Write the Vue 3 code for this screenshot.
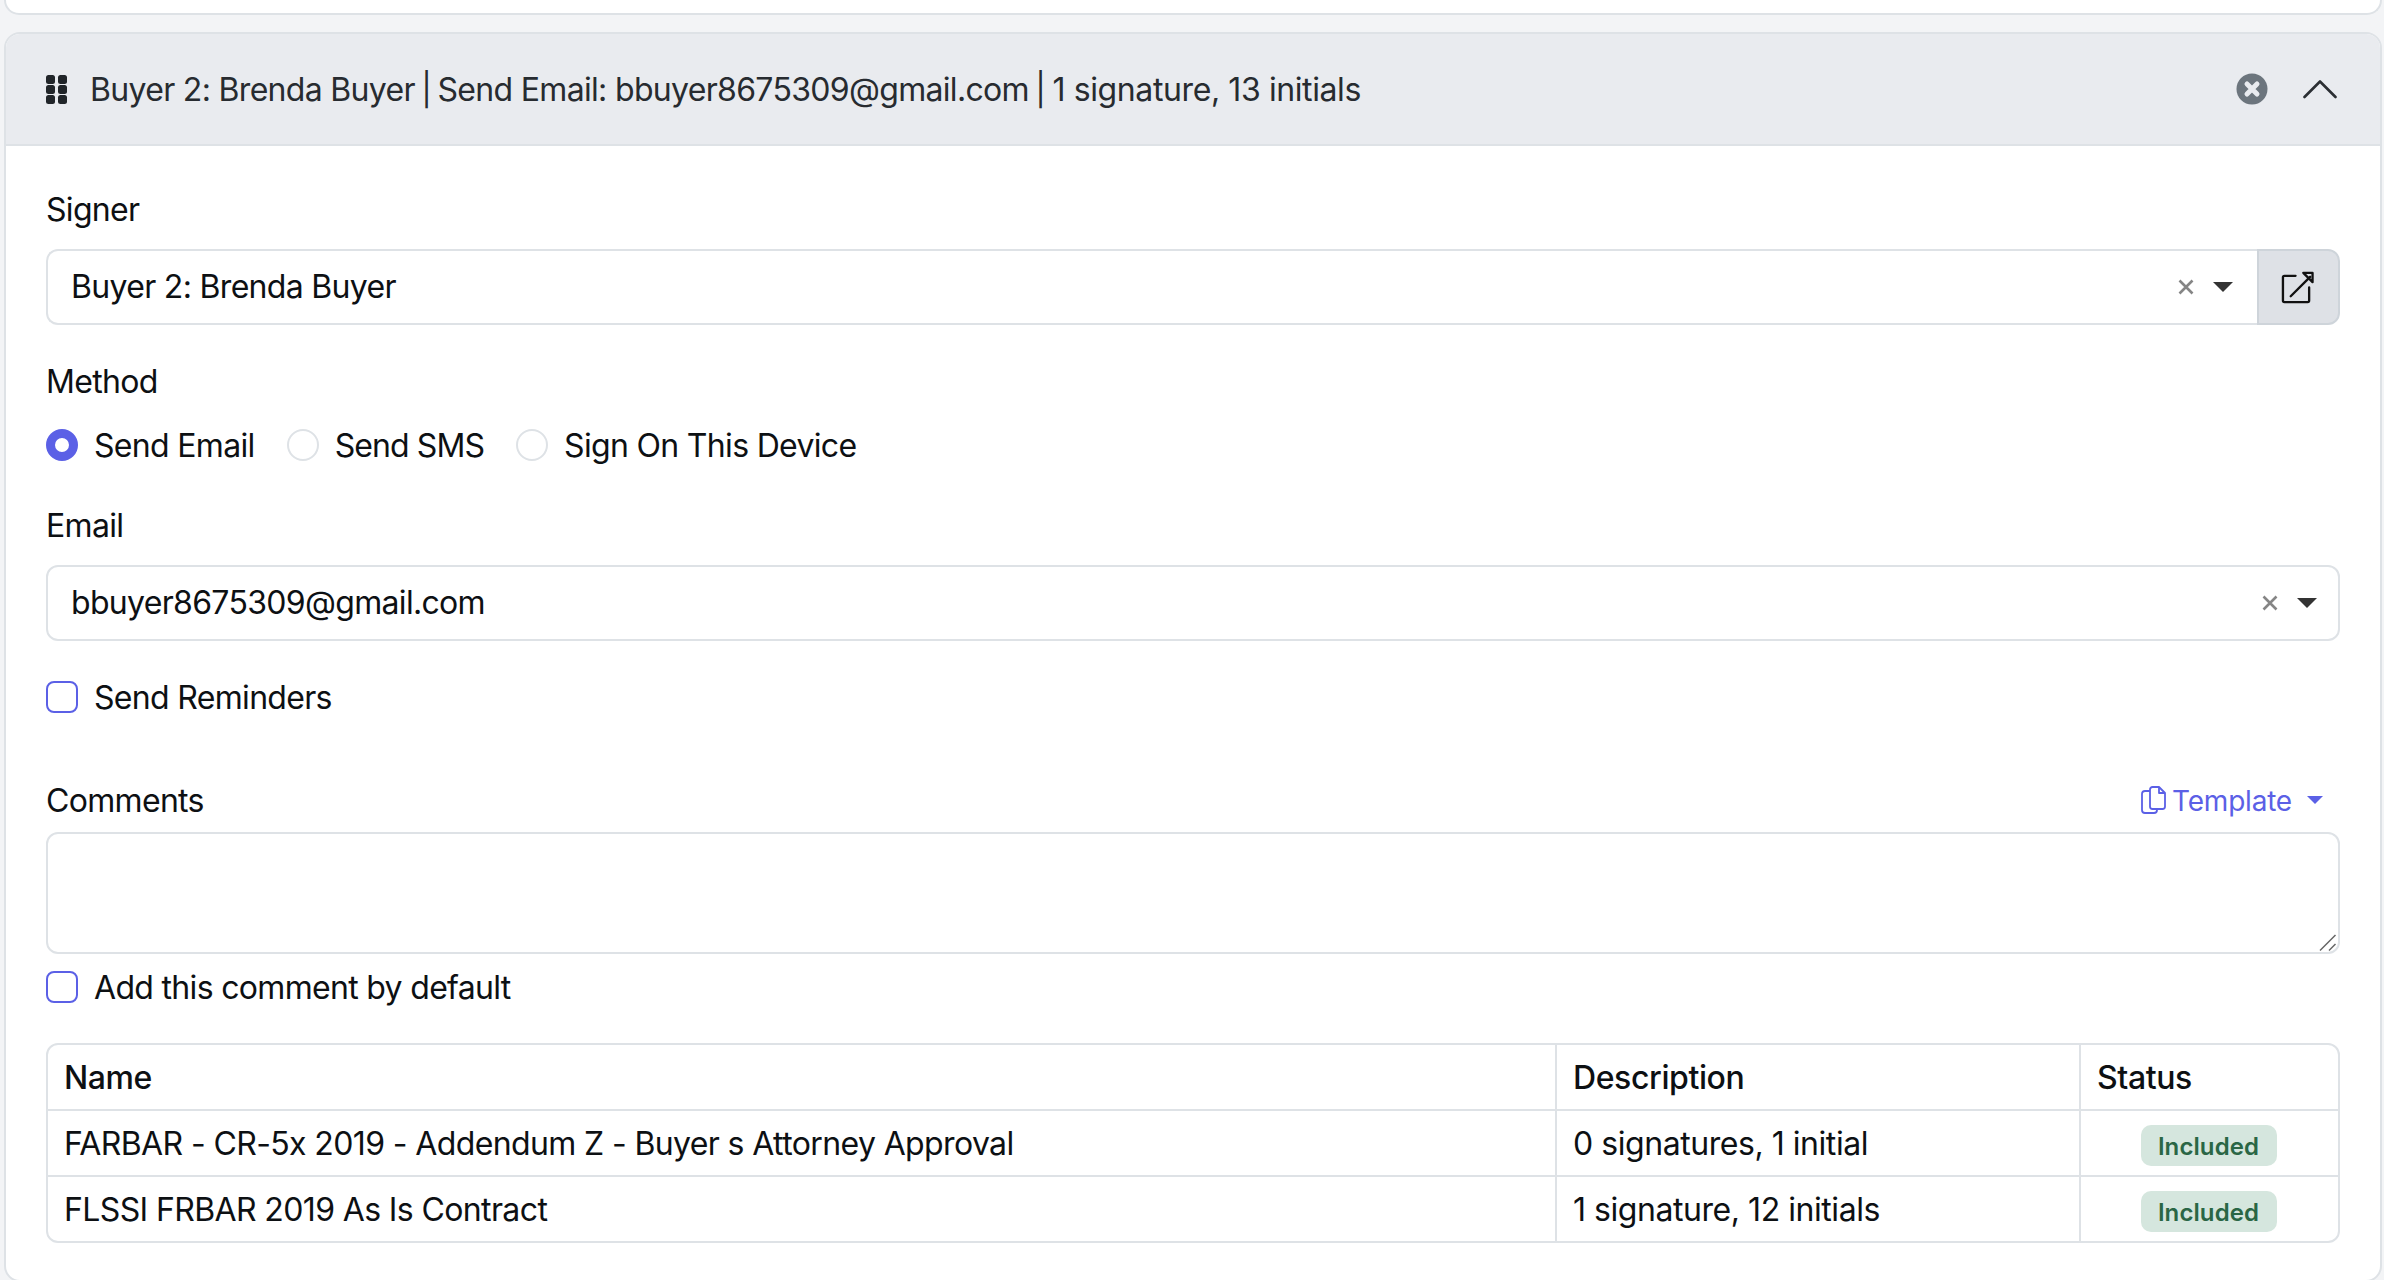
<script setup>
const rows = [
  { pre: 'FARBAR - CR-5', x: 'x', name: ' 2019 - Addendum Z - Buyer s Attorney Approval', desc: '0 signatures, 1 initial' },
  { pre: '', x: '', name: 'FLSSI FRBAR 2019 As Is Contract', desc: '1 signature, 12 initials' },
]
</script>

<template>
  <div class="page">
    <div class="prev-card"></div>
    <section class="card">
      <header class="card-head">
        <svg class="grip" width="22" height="29" viewBox="0 0 22 29" fill="currentColor">
          <rect x="0" y="0" width="9" height="9" rx="2.5" />
          <rect x="12" y="0" width="9" height="9" rx="2.5" />
          <rect x="0" y="10" width="9" height="9" rx="2.5" />
          <rect x="12" y="10" width="9" height="9" rx="2.5" />
          <rect x="0" y="20" width="9" height="9" rx="2.5" />
          <rect x="12" y="20" width="9" height="9" rx="2.5" />
        </svg>
        <span class="head-title">Buyer 2: Brenda Buyer <span class="pipe">|</span> Send Email: bbuyer8675309@gmail.com <span class="pipe pipe-2">|</span> <span class="head-tail">1 signature, 13 initials</span></span>
        <svg class="head-close" width="32" height="32" viewBox="0 0 32 32">
          <circle cx="16" cy="16" r="15.5" fill="#6c757d" />
          <path d="M11 11l10 10M21 11L11 21" stroke="#e9ebef" stroke-width="5" stroke-linecap="round" />
        </svg>
        <svg class="head-chevron" width="34" height="20" viewBox="0 0 34 20" fill="none">
          <path d="M1.5 18L17 2.5 32.5 18" stroke="#2b2f33" stroke-width="2.6" stroke-linecap="round" stroke-linejoin="round" />
        </svg>
      </header>

      <div class="card-body">
        <div class="label">Signer</div>
        <div class="group">
          <div class="select select-joined">
            <span class="select-value">Buyer 2: Brenda Buyer</span>
            <svg class="sel-x" width="16" height="16" viewBox="0 0 16 16"><path d="M1.5 1.5l13 13M14.5 1.5l-13 13" stroke="#858585" stroke-width="2.6" /></svg>
            <span class="sel-arrow"></span>
          </div>
          <button class="ext-btn" type="button">
            <svg width="33" height="33" viewBox="0 0 34 34" fill="none" stroke="#111" stroke-width="2.4" stroke-linejoin="round" stroke-linecap="round">
              <path d="M15 5H3.5A1.5 1.5 0 0 0 2 6.5v24A1.5 1.5 0 0 0 3.500 32h24a1.500 1.500 0 0 0 1.500-1.500V17" />
              <path d="M10 26L30 6" />
              <path d="M23 2h9.500v9.500z" />
            </svg>
          </button>
        </div>

        <div class="label label-method">Method</div>
        <div class="radios">
          <label class="opt"><span class="radio radio-on"></span><span class="opt-text">Send Email</span></label>
          <label class="opt"><span class="radio"></span><span class="opt-text opt-sms">Send SMS</span></label>
          <label class="opt"><span class="radio"></span><span class="opt-text">Sign On This Device</span></label>
        </div>

        <div class="label label-email">Email</div>
        <div class="select">
          <span class="select-value">bbuyer8675309@gmail.com</span>
          <svg class="sel-x" width="16" height="16" viewBox="0 0 16 16"><path d="M1.500 1.500l13 13M14.500 1.500l-13 13" stroke="#858585" stroke-width="2.600" /></svg>
          <span class="sel-arrow"></span>
        </div>

        <label class="opt check-row"><span class="check"></span><span class="opt-text">Send Reminders</span></label>

        <div class="comments-head">
          <span class="comments-label">Comments</span>
          <a class="template">
            <svg width="25" height="28" viewBox="0 0 25 28" fill="none" stroke="currentColor" stroke-width="1.800" stroke-linejoin="round">
              <path d="M9 3.500A2.500 2.500 0 0 1 11.500 1H18l6 6v13.500a2.500 2.500 0 0 1-2.500 2.500h-10A2.500 2.500 0 0 1 9 20.500z" />
              <path d="M18 1v6h6" />
              <path d="M9 5H4A3 3 0 0 0 1 8v16a3 3 0 0 0 3 3h9a3 3 0 0 0 3-3v-1" />
            </svg>
            <span>Template</span>
            <span class="tpl-caret"></span>
          </a>
        </div>
        <div class="area-wrap">
          <textarea class="area"></textarea>
          <svg class="area-grip" width="18" height="18" viewBox="0 0 18 18" fill="none" stroke="#666" stroke-width="1.500">
            <path d="M1 16.500L16.500 1M10 16.500l6.500-6.500" />
          </svg>
        </div>
        <label class="opt check-row2"><span class="check"></span><span class="opt-text">Add this comment by default</span></label>

        <div class="table-wrap">
          <table class="docs">
            <colgroup>
              <col class="c1" />
              <col class="c2" />
              <col />
            </colgroup>
            <thead>
              <tr><th>Name</th><th>Description</th><th>Status</th></tr>
            </thead>
            <tbody>
              <tr v-for="r in rows" :key="r.name">
                <td class="name-cell">{{ r.pre }}<span class="plain-x">{{ r.x }}</span>{{ r.name }}</td>
                <td class="desc-cell">{{ r.desc }}</td>
                <td class="status"><span class="badge">Included</span></td>
              </tr>
            </tbody>
          </table>
        </div>
      </div>
    </section>
  </div>
</template>

<style scoped>
.page {
  width: 2384px;
  height: 1280px;
  overflow: hidden;
  background: #f3f4f6;
  box-sizing: border-box;
  padding-left: 4px;
  font-family: Inter, "Liberation Sans", sans-serif;
  font-size: 32px;
  line-height: 48px;
  letter-spacing: -0.68px;
  color: #0d1013;
}
.prev-card {
  width: 2378px;
  height: 15px;
  box-sizing: border-box;
  background: #fff;
  border: 2px solid #dee2e6;
  border-top: 0;
  border-radius: 0 0 16px 16px;
  margin-bottom: 17px;
}
.card {
  width: 2378px;
  height: 1250px;
  box-sizing: border-box;
  background: #fff;
  border: 2px solid #dee2e6;
  border-radius: 16px;
  overflow: hidden;
}
.card-head {
  height: 112px;
  box-sizing: border-box;
  display: flex;
  align-items: center;
  background: #e9ebef;
  border-bottom: 2px solid #dee2e6;
  padding: 0 43px 0 40px;
  color: #272b30;
}
.grip {
  flex: none;
  margin-right: 22px;
  color: #212529;
}
.head-title { flex: 1; position: relative; top: 1px; }
.pipe { margin: 0 -2px; }
.pipe-2 { margin: 0 -1px 0 -2px; }
.head-tail { letter-spacing: -0.4px; }
.head-close { flex: none; margin-right: 35px; }
.head-chevron { flex: none; margin-bottom: 1px; }
.card-body { padding: 39px 40px 0; }
.label { margin-bottom: 16px; position: relative; top: 1px; }
.label-method { margin-top: 32px; }
.label-email { margin-top: 32px; }
.group { display: flex; }
.select {
  height: 76px;
  box-sizing: border-box;
  display: flex;
  align-items: center;
  border: 2px solid #dee2e6;
  border-radius: 12px;
  padding: 0 22px 0 23px;
  background: #fff;
}
.select-joined {
  flex: 1;
  border-radius: 12px 0 0 12px;
  border-right: 0;
  padding-right: 24px;
}
.select-value { flex: 1; }
.sel-x { flex: none; margin-right: 20px; position: relative; left: 1px; }
.sel-arrow {
  flex: none;
  width: 0;
  height: 0;
  border-left: 10px solid transparent;
  border-right: 10px solid transparent;
  border-top: 10px solid #333;
}
.select:not(.select-joined) .sel-x { left: 2px; }
.select:not(.select-joined) .sel-arrow { position: relative; left: 1px; }
.ext-btn {
  flex: none;
  width: 83px;
  height: 76px;
  padding: 0 3px 0 0;
  display: flex;
  align-items: center;
  justify-content: center;
  background: #dee1e6;
  border: 2px solid #ced4da;
  border-radius: 0 12px 12px 0;
}
.radios { display: flex; gap: 32px; height: 48px; }
.opt { display: flex; align-items: center; gap: 16px; }
.opt-text { position: relative; top: 1px; }
.opt-sms { letter-spacing: -0.9px; }
.radio {
  flex: none;
  width: 32px;
  height: 32px;
  box-sizing: border-box;
  border-radius: 50%;
  border: 2px solid #dee2e6;
  background: #fff;
}
.radio-on {
  border: 9px solid #5b60e6;
}
.check {
  flex: none;
  width: 32px;
  height: 32px;
  box-sizing: border-box;
  border-radius: 8px;
  border: 2px solid #5b60e6;
  background: #fff;
}
.check-row { margin-top: 32px; }
.comments-head {
  margin-top: 56px;
  display: flex;
  justify-content: space-between;
  align-items: center;
  margin-bottom: 7px;
}
.comments-label { position: relative; }
.template {
  display: flex;
  align-items: center;
  color: #5b60e6;
  font-size: 28px;
  letter-spacing: -0.2px;
  margin-right: 17px;
}
.template svg { margin-right: 6px; margin-top: -2px; }
.tpl-caret {
  width: 0;
  height: 0;
  margin-left: 15px;
  margin-top: -3px;
  border-left: 8px solid transparent;
  border-right: 8px solid transparent;
  border-top: 8px solid #5b60e6;
}
.area-wrap { position: relative; }
.area {
  display: block;
  width: 100%;
  height: 122px;
  box-sizing: border-box;
  border: 2px solid #dee2e6;
  border-radius: 12px;
  padding: 12px 23px;
  margin: 0;
  font: inherit;
  outline: none;
  resize: none;
}
.area-grip {
  position: absolute;
  right: 3px;
  bottom: 2px;
}
.check-row2 { margin-top: 9px; }
.table-wrap {
  margin-top: 32px;
  border: 2px solid #dee2e6;
  border-radius: 12px;
  overflow: hidden;
}
.docs {
  width: 100%;
  border-collapse: collapse;
  table-layout: fixed;
}
.c1 { width: 1508px; }
.c2 { width: 524px; }
.docs th, .docs td {
  padding: 9px 16px 7px;
  height: 64px;
  box-sizing: border-box;
  text-align: left;
  border-right: 2px solid #dee2e6;
  border-bottom: 2px solid #dee2e6;
  white-space: nowrap;
}
.docs th { font-weight: 500; letter-spacing: -0.4px; }
.name-cell { letter-spacing: -0.62px; }
.desc-cell { letter-spacing: -0.45px; }
.docs th:last-child, .docs td:last-child { border-right: 0; }
.docs tbody tr:last-child td { border-bottom: 0; }
.plain-x { font-feature-settings: "calt" 0; }
.status { text-align: center !important; line-height: 0; padding-right: 18px !important; }
.badge {
  display: inline-block;
  width: 136px;
  height: 41px;
  line-height: 43px;
  text-align: center;
  border-radius: 10px;
  background: #d5e6de;
  color: #2a6645;
  font-size: 24px;
  font-weight: 600;
  letter-spacing: 0.1px;
  margin-top: 2px;
}
</style>
